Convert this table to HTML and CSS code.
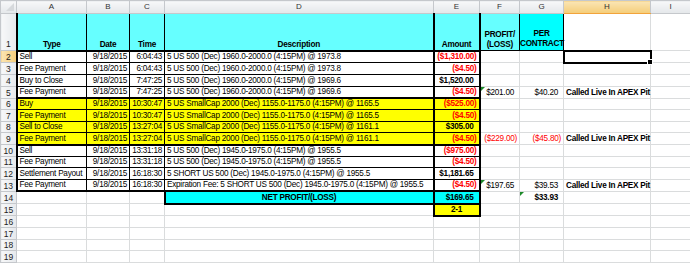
FILE: index.html
```html
<!DOCTYPE html>
<html>
<head>
<meta charset="utf-8">
<link rel="stylesheet" href="styles.css">
</head>
<body>
<table class="sheet">
<colgroup>
<col class="w-rh"><col class="w-a"><col class="w-b"><col class="w-c"><col class="w-d"><col class="w-e"><col class="w-f"><col class="w-g"><col class="w-h"><col class="w-i">
</colgroup>
<tr class="hdr">
<th class="corner"><span class="tri"></span></th><th>A</th><th>B</th><th>C</th><th>D</th><th>E</th><th>F</th><th>G</th><th class="selc">H</th><th>I</th>
</tr>
<tr class="r1">
<th class="rh">1</th>
<td class="hd cy bL bB">Type</td>
<td class="hd cy bB">Date</td>
<td class="hd cy bB">Time</td>
<td class="hd cy bB">Description</td>
<td class="hd cy bL bR bB">Amount</td>
<td class="hd cy2 thin">PROFIT/<br>(LOSS)</td>
<td class="hd cy3 thin">PER<br>CONTRACT</td>
<td></td><td></td>
</tr>
<tr>
<th class="rh selr">2</th>
<td class="t bL">Sell</td><td class="t num">9/18/2015</td><td class="t num">6:04:43</td><td class="t">5 US 500 (Dec) 1960.0-2000.0 (4:15PM) @ 1973.8</td><td class="t amt neg bL bR">($1,310.00)</td>
<td></td><td></td><td class="selcell"><span class="handle"></span></td><td></td>
</tr>
<tr>
<th class="rh">3</th>
<td class="t bL">Fee Payment</td><td class="t num">9/18/2015</td><td class="t num">6:04:43</td><td class="t">5 US 500 (Dec) 1960.0-2000.0 (4:15PM) @ 1973.8</td><td class="t amt neg bL bR">($4.50)</td>
<td></td><td></td><td></td><td></td>
</tr>
<tr>
<th class="rh">4</th>
<td class="t bL">Buy to Close</td><td class="t num">9/18/2015</td><td class="t num">7:47:25</td><td class="t">5 US 500 (Dec) 1960.0-2000.0 (4:15PM) @ 1969.6</td><td class="t amt pos bL bR">$1,520.00</td>
<td></td><td></td><td></td><td></td>
</tr>
<tr>
<th class="rh">5</th>
<td class="t bL">Fee Payment</td><td class="t num">9/18/2015</td><td class="t num">7:47:25</td><td class="t">5 US 500 (Dec) 1960.0-2000.0 (4:15PM) @ 1969.6</td><td class="t amt neg bL bR">($4.50)</td>
<td class="val pos flag">$201.00</td><td class="val pos">$40.20</td><td class="note">Called Live In APEX Pit</td><td></td>
</tr>
<tr class="yel">
<th class="rh">6</th>
<td class="t bL bT">Buy</td><td class="t num bT">9/18/2015</td><td class="t num bT">10:30:47</td><td class="t bT">5 US SmallCap 2000 (Dec) 1155.0-1175.0 (4:15PM) @ 1165.5</td><td class="t amt neg bL bR bT">($525.00)</td>
<td></td><td></td><td></td><td></td>
</tr>
<tr class="yel">
<th class="rh">7</th>
<td class="t bL">Fee Payment</td><td class="t num">9/18/2015</td><td class="t num">10:30:47</td><td class="t">5 US SmallCap 2000 (Dec) 1155.0-1175.0 (4:15PM) @ 1165.5</td><td class="t amt neg bL bR">($4.50)</td>
<td></td><td></td><td></td><td></td>
</tr>
<tr class="yel">
<th class="rh">8</th>
<td class="t bL">Sell to Close</td><td class="t num">9/18/2015</td><td class="t num">13:27:04</td><td class="t">5 US SmallCap 2000 (Dec) 1155.0-1175.0 (4:15PM) @ 1161.1</td><td class="t amt pos bL bR">$305.00</td>
<td></td><td></td><td></td><td></td>
</tr>
<tr class="yel">
<th class="rh">9</th>
<td class="t bL bB">Fee Payment</td><td class="t num bB">9/18/2015</td><td class="t num bB">13:27:04</td><td class="t bB">5 US SmallCap 2000 (Dec) 1155.0-1175.0 (4:15PM) @ 1161.1</td><td class="t amt neg bL bR bB">($4.50)</td>
<td class="val neg">($229.00)</td><td class="val neg">($45.80)</td><td class="note">Called Live In APEX Pit</td><td></td>
</tr>
<tr>
<th class="rh">10</th>
<td class="t bL">Sell</td><td class="t num">9/18/2015</td><td class="t num">13:31:18</td><td class="t">5 US 500 (Dec) 1945.0-1975.0 (4:15PM) @ 1955.5</td><td class="t amt neg bL bR">($975.00)</td>
<td></td><td></td><td></td><td></td>
</tr>
<tr>
<th class="rh">11</th>
<td class="t bL">Fee Payment</td><td class="t num">9/18/2015</td><td class="t num">13:31:18</td><td class="t">5 US 500 (Dec) 1945.0-1975.0 (4:15PM) @ 1955.5</td><td class="t amt neg bL bR">($4.50)</td>
<td></td><td></td><td></td><td></td>
</tr>
<tr>
<th class="rh">12</th>
<td class="t bL">Settlement Payout</td><td class="t num">9/18/2015</td><td class="t num">16:18:30</td><td class="t">5 SHORT US 500 (Dec) 1945.0-1975.0 (4:15PM) @ 1955.5</td><td class="t amt pos bL bR">$1,181.65</td>
<td></td><td></td><td></td><td></td>
</tr>
<tr>
<th class="rh">13</th>
<td class="t bL bB">Fee Payment</td><td class="t num bB">9/18/2015</td><td class="t num bB">16:18:30</td><td class="t bB">Expiration Fee: 5 SHORT US 500 (Dec) 1945.0-1975.0 (4:15PM) @ 1955.5</td><td class="t amt neg bL bR bB">($4.50)</td>
<td class="val pos flag">$197.65</td><td class="val pos">$39.53</td><td class="note">Called Live In APEX Pit</td><td></td>
</tr>
<tr>
<th class="rh">14</th>
<td></td><td></td><td></td><td class="net bL bT bB">NET PROFIT/(LOSS)</td><td class="amt pos cy3 bL bR bT bB">$169.65</td>
<td></td><td class="val pos bold flag">$33.93</td><td></td><td></td>
</tr>
<tr>
<th class="rh">15</th>
<td></td><td></td><td></td><td></td><td class="ratio bL bR bT bB">2-1</td>
<td></td><td></td><td></td><td></td>
</tr>
<tr><th class="rh">16</th><td></td><td></td><td></td><td></td><td></td><td></td><td></td><td></td><td></td></tr>
<tr><th class="rh">17</th><td></td><td></td><td></td><td></td><td></td><td></td><td></td><td></td><td></td></tr>
<tr><th class="rh">18</th><td></td><td></td><td></td><td></td><td></td><td></td><td></td><td></td><td></td></tr>
<tr><th class="rh">19</th><td></td><td></td><td></td><td></td><td></td><td></td><td></td><td></td><td></td></tr>
</table>
</body>
</html>
```
FILE: styles.css
```css
body {
  margin: 0;
  background: #ffffff;
  overflow: hidden;
}

.sheet {
  border-collapse: collapse;
  table-layout: fixed;
  width: 690px;
  font-family: "Liberation Sans", Arial, sans-serif;
  font-size: 8.2px;
  letter-spacing: -0.25px;
  color: #000;
}

.w-rh { width: 16px; }
.w-a { width: 70px; }
.w-b { width: 43px; }
.w-c { width: 35px; }
.w-d { width: 269px; }
.w-e { width: 46px; }
.w-f { width: 40px; }
.w-g { width: 44px; }
.w-h { width: 87px; }
.w-i { width: 40px; }

.sheet td,
.sheet th {
  height: 10.4px;
  padding: 0 2px;
  border: 1px solid #dadcdd;
  white-space: nowrap;
  vertical-align: bottom;
  line-height: 10px;
  position: relative;
}

/* column headers */
.hdr th {
  height: 12px;
  background: linear-gradient(#f7f8f9, #e4e7ea);
  border-color: #c5c8cc;
  font-weight: normal;
  color: #333;
  text-align: center;
  vertical-align: middle;
  font-size: 8px;
  letter-spacing: 0;
}
.hdr th.selc {
  background: linear-gradient(#fbe5b4, #f5cd78);
  border-bottom: 1px solid #f2a33a;
  color: #333;
}
.corner .tri {
  position: absolute;
  right: 2px;
  bottom: 2px;
  width: 0;
  height: 0;
  border-left: 8px solid transparent;
  border-bottom: 8px solid #d6d9dc;
}

/* row headers */
.rh {
  background: linear-gradient(90deg, #f7f8f9, #e6e9ec);
  border-color: #c5c8cc !important;
  font-weight: normal;
  color: #222;
  text-align: center;
  vertical-align: bottom;
  padding: 0 !important;
  font-size: 8.5px;
  letter-spacing: 0;
}
.rh.selr {
  background: linear-gradient(90deg, #fbe5b4, #f5cd78);
  border-right: 1px solid #f2a33a !important;
}

.r1 td,
.r1 th { height: 35px; }
.r1 .rh { padding-bottom: 1px !important; }

.hd {
  font-weight: bold;
  text-align: center;
  border: 1px solid #000 !important;
  line-height: 11px;
  padding-bottom: 1px;
}
.cy { background: #66ffff; }
.cy2 { background: #66ffff; }
.cy3 { background: #00ffff; }
.thin { border: 1px solid #000 !important; }
.cy3.hd { padding: 0 0 1px 0; }

.t { border: 1px solid #000 !important; }
.num { text-align: right; }
.amt { text-align: right; font-weight: bold; }
.neg { color: #ff0000; }
.pos { padding-right: 5px !important; }

.bL { border-left: 2px solid #000 !important; }
.bR { border-right: 2px solid #000 !important; }
.bT { border-top: 2px solid #000 !important; }
.bB { border-bottom: 2px solid #000 !important; }

.yel .t { background: #ffff00; }

.val { text-align: right; }
.bold { font-weight: bold; }
.note { font-weight: bold; padding-left: 3px; }

.flag::before {
  content: "";
  position: absolute;
  left: 0;
  top: 0;
  width: 0;
  height: 0;
  border-top: 4px solid #1d8a2a;
  border-right: 4px solid transparent;
}

.net {
  background: #00ffff;
  font-weight: bold;
  text-align: center;
}

.ratio {
  background: #ffff00;
  font-weight: bold;
  text-align: center;
}

.selcell {
  border: 2px solid #000 !important;
}
.handle {
  position: absolute;
  right: -3px;
  bottom: -3px;
  width: 4px;
  height: 4px;
  background: #000;
  border: 1px solid #fff;
}
```
